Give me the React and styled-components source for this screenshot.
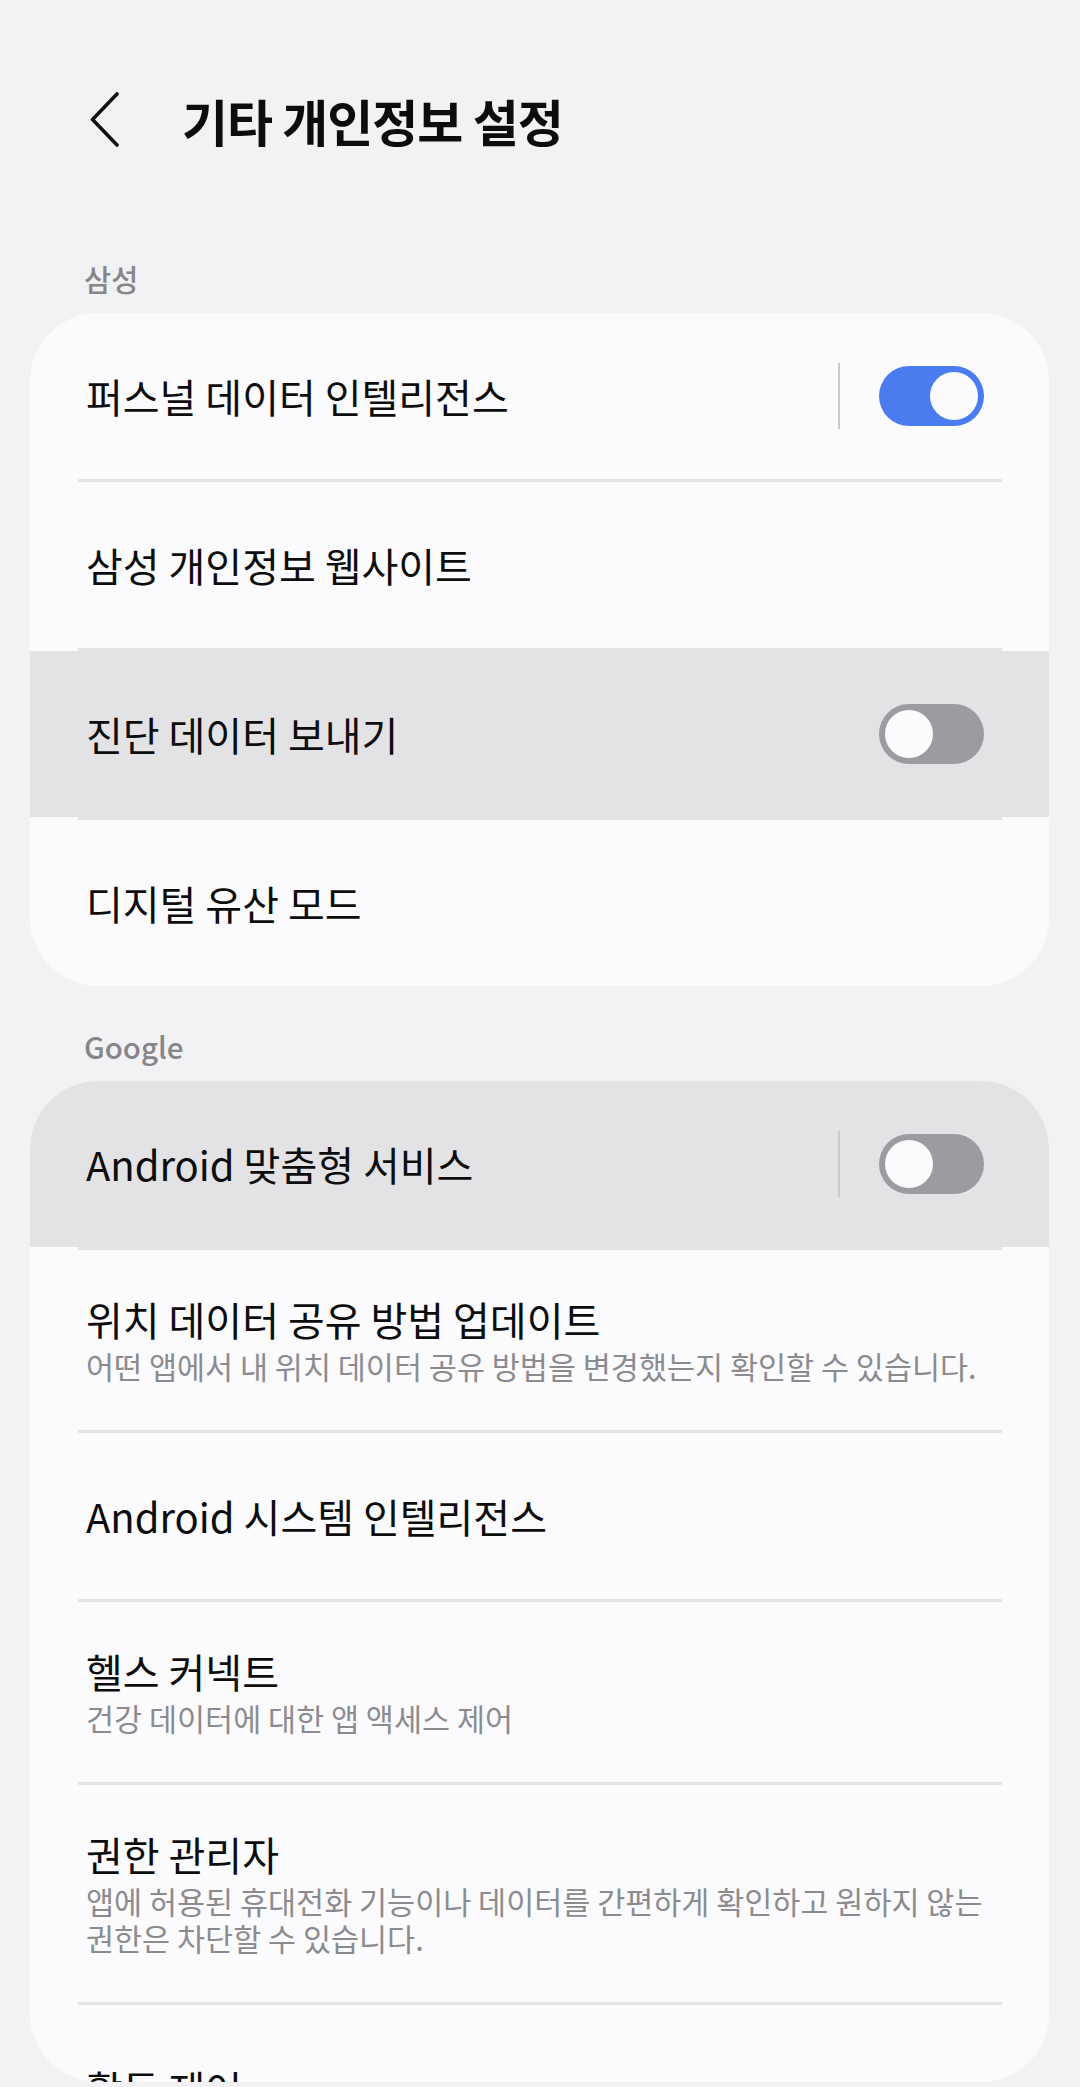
import React from 'react'
import styled, { createGlobalStyle } from 'styled-components'

const GlobalStyle = createGlobalStyle`
  html, body {
    margin: 0;
    padding: 0;
    background: #f2f2f4;
  }

  body {
    font-family: "Noto Sans CJK KR", "Noto Sans", sans-serif;
    color: #111;
  }
`

const samsungRows = [
  { title: '퍼스널 데이터 인텔리전스', toggle: true, on: true, separator: true },
  { title: '삼성 개인정보 웹사이트' },
  { title: '진단 데이터 보내기', toggle: true, on: false, pressed: true },
  { title: '디지털 유산 모드' },
]

const googleRows = [
  { title: 'Android 맞춤형 서비스', toggle: true, on: false, separator: true, pressed: true },
  { title: '위치 데이터 공유 방법 업데이트', summary: '어떤 앱에서 내 위치 데이터 공유 방법을 변경했는지 확인할 수 있습니다.' },
  { title: 'Android 시스템 인텔리전스' },
  { title: '헬스 커넥트', summary: '건강 데이터에 대한 앱 액세스 제어' },
  { title: '권한 관리자', summary: '앱에 허용된 휴대전화 기능이나 데이터를 간편하게 확인하고 원하지 않는 권한은 차단할 수 있습니다.' },
  { title: '활동 제어' },
]

const Toggle = ({ on }) => (
  <Track $on={on}>
    <Thumb $on={on} />
  </Track>
)

const SettingsCard = ({ rows, clip }) => (
  <Card $clip={clip}>
    {rows.map((row, i) => (
      <React.Fragment key={row.title}>
        {i > 0 && <Divider />}
        <Row $pressed={row.pressed}>
          <RowText>
            <RowTitle>{row.title}</RowTitle>
            {row.summary && <RowSummary>{row.summary}</RowSummary>}
          </RowText>
          {row.toggle && (
            <Trailing>
              {row.separator && <VLine />}
              <Toggle on={row.on} />
            </Trailing>
          )}
        </Row>
      </React.Fragment>
    ))}
  </Card>
)

const App = () => {
  return (
    <Page>
      <GlobalStyle />

      {/* header */}
      <Header>
        <BackButton aria-label="뒤로">
          <svg width="30" height="56" viewBox="0 0 30 56" fill="none">
            <path d="M27 2 L2.5 27.5 L27 53" stroke="#111" strokeWidth="3.6" strokeLinecap="round" strokeLinejoin="round" />
          </svg>
        </BackButton>
        <Title>기타 개인정보 설정</Title>
      </Header>

      <SectionLabel>삼성</SectionLabel>
      <SettingsCard rows={samsungRows} />

      <SectionLabel>Google</SectionLabel>
      <SettingsCard rows={googleRows} clip />
    </Page>
  )
}

const Page = styled.div`
  width: 1080px;
  height: 2087px;
  box-sizing: border-box;
  padding: 0 31px 0 30px;
  overflow: hidden;
  background: #f2f2f4;
`

const Header = styled.header`
  display: flex;
  align-items: center;
  gap: 62px;
  height: 96px;
  padding: 72px 0 0 60px;
  margin-bottom: 92px;
`

const BackButton = styled.button`
  display: flex;
  align-items: center;
  padding: 0;
  border: none;
  background: none;
  width: 30px;
  height: 56px;
`

const Title = styled.h1`
  margin: 0;
  font-size: 50px;
  font-weight: 700;
  letter-spacing: -1px;
  color: #0c0c0c;
`

const SectionLabel = styled.div`
  margin: 0 0 17px 54px;
  font-size: 29.5px;
  line-height: 36px;
  font-weight: 500;
  color: #86868a;
`

const Card = styled.section`
  background: #fbfbfd;
  border-radius: 68px;
  overflow: hidden;
  margin-bottom: 42px;
  max-height: ${({ $clip }) => ($clip ? '1001px' : 'none')};
`

const Row = styled.div`
  display: flex;
  align-items: center;
  justify-content: space-between;
  min-height: 166px;
  box-sizing: border-box;
  padding: 45px 48px 45px 56px;
  background: ${({ $pressed }) => ($pressed ? '#e3e3e5' : 'transparent')};
`

const RowText = styled.div`
  display: flex;
  flex-direction: column;
  gap: 5px;
  min-width: 0;
`

const RowTitle = styled.div`
  font-size: 40px;
  line-height: 48px;
  color: #0d0d0d;
`

const RowSummary = styled.div`
  font-size: 30.5px;
  line-height: 37px;
  color: #8b8b8f;
  word-break: keep-all;
`

const Divider = styled.div`
  height: 3px;
  margin: 0 47px 0 48px;
  background: #e4e4e6;
`

const Trailing = styled.div`
  display: flex;
  align-items: center;
  gap: 39px;
  flex-shrink: 0;
  margin-right: 17px;
`

const VLine = styled.div`
  width: 2px;
  height: 66px;
  background: #cacacc;
`

const Track = styled.div`
  display: flex;
  align-items: center;
  justify-content: ${({ $on }) => ($on ? 'flex-end' : 'flex-start')};
  width: 105px;
  height: 60px;
  box-sizing: border-box;
  padding: 0 6px;
  border-radius: 30px;
  background: ${({ $on }) => ($on ? '#4a7cf0' : '#9c9ca0')};
`

const Thumb = styled.div`
  width: 48px;
  height: 48px;
  border-radius: 50%;
  background: #fcfcfe;
`

export default App
